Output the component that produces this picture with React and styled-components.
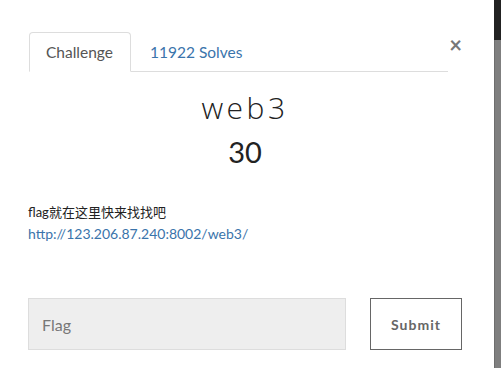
import React from "react";
import styled, { createGlobalStyle } from "styled-components";

const GlobalStyle = createGlobalStyle`
  html, body {
    margin: 0;
    padding: 0;
    background: #fff;
  }
  body {
    font-family: Lato, "Noto Sans CJK SC", sans-serif;
    color: #333;
  }
`;

const Page = styled.div`
  display: flex;
  width: 501px;
  height: 368px;
  overflow: hidden;
`;

const Modal = styled.div`
  flex: 1;
  background: #fff;
  padding: 32px 32px 0 28px;
  box-sizing: border-box;
`;

const Backdrop = styled.div`
  width: 7px;
  display: flex;
  flex-direction: column;
`;

const BackdropTop = styled.div`
  height: 40px;
  background: #222;
`;

const BackdropRest = styled.div`
  flex: 1;
  background: #7f7f7f;
  border-left: 1px solid #6e6e6e;
`;

const HeaderRow = styled.div`
  display: flex;
  align-items: flex-start;
`;

const Tabs = styled.ul`
  display: flex;
  list-style: none;
  margin: 0 0 0 1px;
  padding: 0;
  width: 419px;
  border-bottom: 1px solid #ddd;
`;

const Tab = styled.li`
  height: 40px;
  box-sizing: border-box;
  padding: 0 17px 0 16px;
  margin-bottom: -1px;
  display: flex;
  align-items: center;
  font-size: 15.5px;
  border: 1px solid ${({ active }) => (active ? "#ddd" : "transparent")};
  border-bottom-color: ${({ active }) => (active ? "#fff" : "transparent")};
  border-radius: 4px 4px 0 0;
  background: ${({ active }) => (active ? "#fff" : "transparent")};
  color: ${({ active }) => (active ? "#555" : "#3a74ab")};
  margin-right: 2px;
`;

const Close = styled.button`
  margin-left: auto;
  margin-top: 3px;
  border: none;
  background: none;
  padding: 0;
  font-family: Lato, sans-serif;
  font-size: 22px;
  font-weight: 700;
  line-height: 20px;
  color: #777;
  cursor: pointer;
`;

const Title = styled.h2`
  margin: 18px 0 0;
  text-align: center;
  font-family: "Open Sans", sans-serif;
  font-weight: 300;
  font-size: 30px;
  letter-spacing: 3.5px;
  line-height: 36px;
  color: #222;
`;

const Value = styled.h3`
  margin: 8px 0 0;
  text-align: center;
  font-family: Lato, sans-serif;
  font-weight: 400;
  font-size: 29px;
  line-height: 36px;
  color: #222;
`;

const Description = styled.div`
  margin-top: 31px;
  font-size: 13px;
  line-height: 22px;
  color: #222;
`;

const Link = styled.a`
  font-size: 14px;
  color: #3a74ab;
  text-decoration: none;
`;

const FormRow = styled.div`
  display: flex;
  align-items: stretch;
  margin-top: 53px;
  gap: 24px;
`;

const FlagInput = styled.input`
  width: 318px;
  height: 52px;
  box-sizing: border-box;
  background: #eee;
  border: 1px solid #ddd;
  padding: 0 13px;
  font-family: Lato, sans-serif;
  font-size: 16px;
  color: #555;
  outline: none;

  &::placeholder {
    color: #777;
  }
`;

const SubmitButton = styled.button`
  width: 92px;
  height: 52px;
  box-sizing: border-box;
  background: #fff;
  border: 1px solid #666;
  font-family: Lato, sans-serif;
  font-weight: 700;
  font-size: 14px;
  letter-spacing: 1px;
  color: #666;
  cursor: pointer;
`;

export default function App() {
  return (
    <Page>
      <GlobalStyle />
      <Modal>
        <HeaderRow>
          <Tabs>
            <Tab active>Challenge</Tab>
            <Tab>11922 Solves</Tab>
          </Tabs>
          <Close>×</Close>
        </HeaderRow>
        <Title>web3</Title>
        <Value>30</Value>
        <Description>
          <div>flag就在这里快来找找吧</div>
          <Link href="#">http://123.206.87.240:8002/web3/</Link>
        </Description>
        <FormRow>
          <FlagInput placeholder="Flag" />
          <SubmitButton>Submit</SubmitButton>
        </FormRow>
      </Modal>
      <Backdrop>
        <BackdropTop />
        <BackdropRest />
      </Backdrop>
    </Page>
  );
}
